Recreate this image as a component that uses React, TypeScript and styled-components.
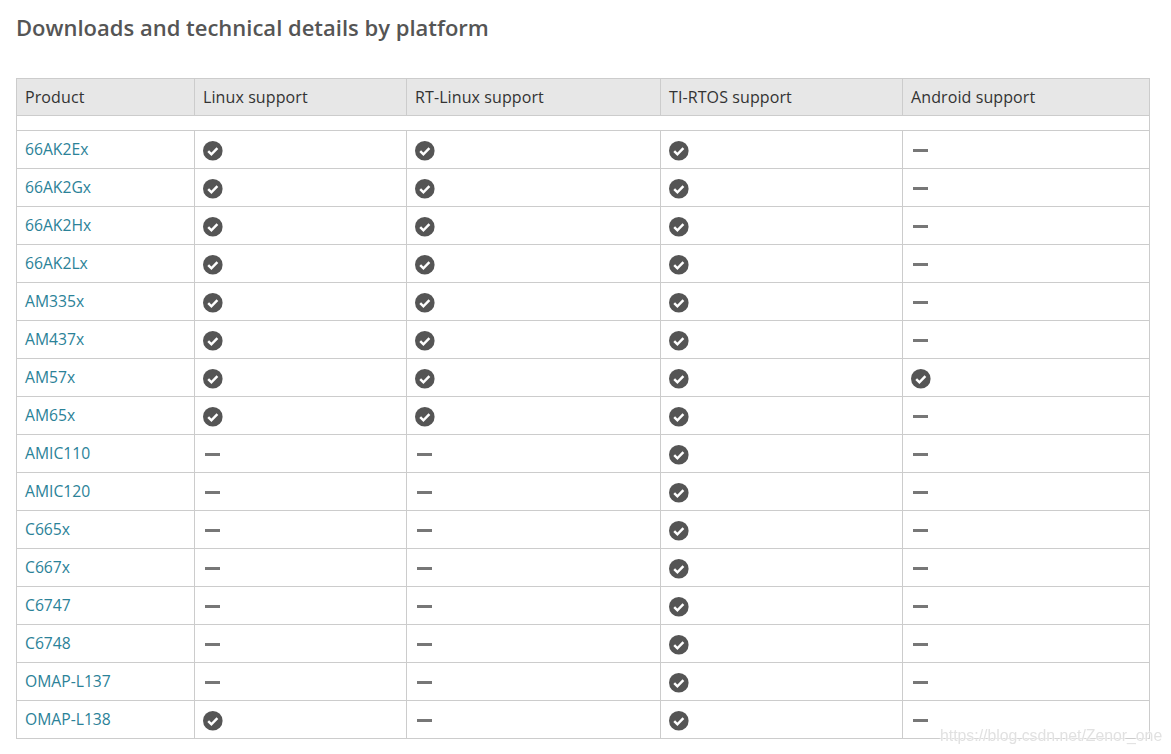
import React from "react";
import styled, { createGlobalStyle } from "styled-components";

const Global = createGlobalStyle`
  html, body { margin: 0; padding: 0; background: #fff; }
  body { font-family: "Open Sans", "Liberation Sans", sans-serif; color: #555; }
`;

const Page = styled.div`
  position: relative;
  width: 1171px;
  height: 754px;
  overflow: hidden;
  padding: 12px 22px 0 16px;
  box-sizing: border-box;
`;

const Title = styled.h2`
  margin: 0 0 35px;
  font-size: 22px;
  line-height: 31px;
  font-weight: 600;
  color: #555;
`;

const Table = styled.table`
  width: 1133px;
  table-layout: fixed;
  border-collapse: collapse;
  font-size: 16px;
`;

const HeadCell = styled.th`
  height: 37px;
  padding: 0 8px;
  box-sizing: border-box;
  border: 1px solid #ccc;
  background: #e7e7e7;
  color: #333;
  font-weight: 400;
  letter-spacing: 0.1px;
  text-align: left;
  line-height: 22px;
`;

const Spacer = styled.td`
  height: 14px;
  padding: 0;
  border: 1px solid #ccc;
`;

const Cell = styled.td`
  height: 38px;
  padding: 0 8px 2px;
  box-sizing: border-box;
  border: 1px solid #ccc;
  line-height: 22px;
`;

const ProductLink = styled.a`
  color: #2b8298;
  font-size: 15.7px;
  text-decoration: none;
`;

const Mark = styled.svg`
  display: block;
  width: 20px;
  height: 20px;
  margin: 4px 0 0 0;
`;

const Dash = styled.span`
  display: block;
  width: 15px;
  height: 3px;
  margin: 3px 0 0 2px;
  background: #777;
`;

const Watermark = styled.span`
  position: absolute;
  left: 940px;
  top: 726px;
  font-family: "Liberation Sans", Arial, sans-serif;
  font-size: 15.8px;
  line-height: 20px;
  color: rgba(205, 205, 205, 0.6);
  text-shadow: 0 0 2px #fff, 0 0 2px #fff, 0 0 1px #fff;
  filter: blur(0.4px);
  white-space: nowrap;
`;

const Check = () => (
  <Mark viewBox="0 0 20 20" aria-label="supported">
    <circle cx="9.8" cy="9.8" r="9.8" fill="#555" />
    <path d="M5.2 10.2 L8.4 13.3 L14.4 7.2" fill="none" stroke="#fff" strokeWidth="2.5" />
  </Mark>
);

const widths = [178, 212, 254, 242, 247];
const heads = ["Product", "Linux support", "RT-Linux support", "TI-RTOS support", "Android support"];

const rows: [string, number, number, number, number][] = [
  ["66AK2Ex", 1, 1, 1, 0],
  ["66AK2Gx", 1, 1, 1, 0],
  ["66AK2Hx", 1, 1, 1, 0],
  ["66AK2Lx", 1, 1, 1, 0],
  ["AM335x", 1, 1, 1, 0],
  ["AM437x", 1, 1, 1, 0],
  ["AM57x", 1, 1, 1, 1],
  ["AM65x", 1, 1, 1, 0],
  ["AMIC110", 0, 0, 1, 0],
  ["AMIC120", 0, 0, 1, 0],
  ["C665x", 0, 0, 1, 0],
  ["C667x", 0, 0, 1, 0],
  ["C6747", 0, 0, 1, 0],
  ["C6748", 0, 0, 1, 0],
  ["OMAP-L137", 0, 0, 1, 0],
  ["OMAP-L138", 1, 0, 1, 0],
];

export default function App() {
  return (
    <Page>
      <Global />
      <Title>Downloads and technical details by platform</Title>
      <Table>
        <colgroup>
          {widths.map((w, i) => (
            <col key={i} style={{ width: w }} />
          ))}
        </colgroup>
        <thead>
          <tr>
            {heads.map((h) => (
              <HeadCell key={h}>{h}</HeadCell>
            ))}
          </tr>
        </thead>
        <tbody>
          <tr>
            <Spacer colSpan={5} />
          </tr>
          {rows.map(([name, ...flags]) => (
            <tr key={name}>
              <Cell>
                <ProductLink href="#">{name}</ProductLink>
              </Cell>
              {flags.map((f, i) => (
                <Cell key={i}>{f ? <Check /> : <Dash />}</Cell>
              ))}
            </tr>
          ))}
        </tbody>
      </Table>
      <Watermark>https://blog.csdn.net/Zenor_one</Watermark>
    </Page>
  );
}
